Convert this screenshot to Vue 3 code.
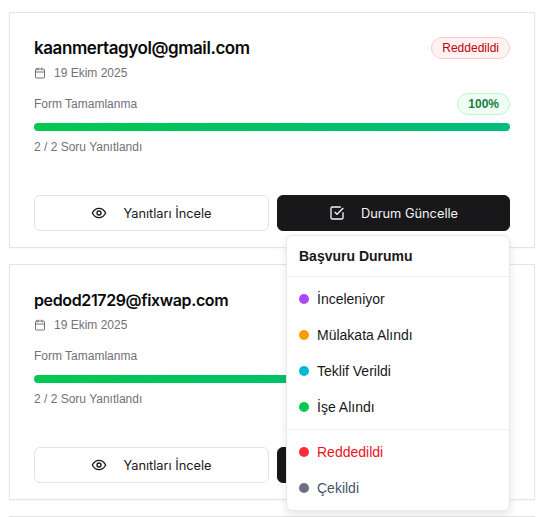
<script setup>
const applicants = [
  { email: 'kaanmertagyol@gmail.com', status: 'Reddedildi', open: true, size: 17, track: -0.43 },
  { email: 'pedod21729@fixwap.com', status: '', open: false, size: 16, track: -0.37 }
]
const menuMain = [
  { label: 'İnceleniyor', color: '#ad46ff' },
  { label: 'Mülakata Alındı', color: '#fe9a00' },
  { label: 'Teklif Verildi', color: '#00b8db' },
  { label: 'İşe Alındı', color: '#00c950' }
]
</script>

<template>
  <main class="page">
    <article v-for="a in applicants" :key="a.email" class="card">
      <header class="head">
        <div>
          <h2 class="email" :style="{ fontSize: a.size + 'px', letterSpacing: a.track + 'px' }">{{ a.email }}</h2>
          <div class="date">
            <svg class="cal" viewBox="0 0 24 24" fill="none" stroke="currentColor" stroke-width="2" stroke-linecap="round" stroke-linejoin="round">
              <path d="M8 2v4M16 2v4" />
              <rect x="3" y="4" width="18" height="18" rx="2" />
              <path d="M3 10h18" />
            </svg>
            <span>19 Ekim 2025</span>
          </div>
        </div>
        <span v-if="a.status" class="badge">{{ a.status }}</span>
      </header>

      <div class="progress-head">
        <span>Form Tamamlanma</span>
        <span class="pct">100%</span>
      </div>
      <div class="bar"></div>
      <div class="answered">2 / 2 Soru Yanıtlandı</div>

      <div class="actions">
        <button class="btn ghost">
          <svg class="ico" viewBox="0 0 24 24" fill="none" stroke="currentColor" stroke-width="2" stroke-linecap="round" stroke-linejoin="round">
            <path d="M2 12s3.6-7 10-7 10 7 10 7-3.6 7-10 7-10-7-10-7z" />
            <circle cx="12" cy="12" r="3" />
          </svg>
          <span>Yanıtları İncele</span>
        </button>
        <button class="btn dark">
          <svg class="ico" viewBox="0 0 24 24" fill="none" stroke="currentColor" stroke-width="2" stroke-linecap="round" stroke-linejoin="round">
            <path d="M21 11.5V19a2 2 0 0 1-2 2H5a2 2 0 0 1-2-2V5a2 2 0 0 1 2-2h12" />
            <path d="M9 11l3 3 9-9" />
          </svg>
          <span>Durum Güncelle</span>
        </button>

        <div v-if="a.open" class="menu">
          <div class="menu-title">Başvuru Durumu</div>
          <div class="menu-group first">
            <div v-for="m in menuMain" :key="m.label" class="item">
              <i class="dot" :style="{ background: m.color }"></i>{{ m.label }}
            </div>
          </div>
          <div class="menu-group">
            <div class="item red"><i class="dot" style="background:#fb2c36"></i>Reddedildi</div>
            <div class="item slate"><i class="dot" style="background:#6a7282"></i>Çekildi</div>
          </div>
        </div>
      </div>
    </article>
    <div class="next"></div>
  </main>
</template>

<style scoped>
.page {
  width: 546px;
  height: 517px;
  box-sizing: border-box;
  padding: 12px 11px 0 9px;
  overflow: hidden;
  display: flex;
  flex-direction: column;
  gap: 16px;
  background: #fff;
  font-family: "Liberation Sans", Arial, sans-serif;
}
.card {
  height: 236px;
  flex: none;
  box-sizing: border-box;
  border: 1px solid #e4e4e7;
  box-shadow: 0 1px 2px rgba(0, 0, 0, 0.03);
  padding: 23px 24px 16px;
  display: flex;
  flex-direction: column;
  background: #fff;
}
.head {
  display: flex;
  justify-content: space-between;
  align-items: flex-start;
  height: 57px;
}
.email {
  margin: 0;
  font-family: Inter, "Open Sans", sans-serif;
  line-height: 24px;
  font-weight: 600;
  color: #0a0a0a;
}
.date {
  margin-top: 1px;
  display: flex;
  align-items: center;
  gap: 8px;
  font-size: 12px;
  line-height: 24px;
  color: #71717a;
}
.cal {
  width: 12px;
  height: 12px;
}
.badge {
  box-sizing: border-box;
  height: 22px;
  margin-top: 1px;
  padding: 0 10px;
  border: 1px solid #ffc9c9;
  border-radius: 11px;
  background: #fef2f2;
  color: #c10007;
  font-size: 12px;
  line-height: 20px;
}
.progress-head {
  display: flex;
  justify-content: space-between;
  align-items: center;
  height: 22px;
  font-size: 12px;
  color: #71717a;
}
.pct {
  box-sizing: border-box;
  height: 22px;
  padding: 0 10px;
  border: 1px solid #b9f8cf;
  border-radius: 11px;
  background: #f0fdf4;
  color: #15803d;
  font-weight: 700;
  line-height: 20px;
}
.bar {
  margin-top: 8px;
  height: 8px;
  border-radius: 4px;
  background: linear-gradient(90deg, #00c950, #00bc7d);
}
.answered {
  margin-top: 8px;
  font-size: 12px;
  line-height: 16px;
  color: #71717a;
}
.actions {
  position: relative;
  margin-top: auto;
  display: flex;
  gap: 8px;
}
.btn {
  height: 36px;
  box-sizing: border-box;
  border-radius: 6px;
  display: flex;
  align-items: center;
  justify-content: center;
  gap: 16px;
  padding: 0;
  font-family: Inter, "Open Sans", sans-serif;
  font-size: 12.8px;
}
.ghost {
  width: 235px;
  background: #fff;
  border: 1px solid #e4e4e7;
  color: #18181b;
}
.dark {
  width: 233px;
  background: #18181b;
  border: 1px solid #18181b;
  color: #f4f4f5;
}
.ico {
  width: 16px;
  height: 16px;
}
.menu {
  position: absolute;
  z-index: 2;
  top: 40px;
  right: 0;
  width: 224px;
  box-sizing: border-box;
  background: #fff;
  border: 1px solid #e8e8ea;
  border-radius: 6px;
  box-shadow: 0 4px 8px rgba(0, 0, 0, 0.1);
}
.menu-title {
  height: 40px;
  padding-left: 12px;
  font-size: 14px;
  font-weight: 700;
  line-height: 40px;
  color: #18181b;
}
.menu-group {
  padding: 4px 0;
  border-top: 1px solid #f0f0f1;
}
.item {
  height: 36px;
  display: flex;
  align-items: center;
  gap: 8px;
  padding-left: 12px;
  font-size: 14px;
  color: #18181b;
}
.dot {
  width: 10px;
  height: 10px;
  border-radius: 50%;
}
.red {
  color: #f01020;
}
.slate {
  color: #45556c;
}
.next {
  flex: none;
  height: 10px;
  border-top: 1px solid #e4e4e7;
}
</style>
